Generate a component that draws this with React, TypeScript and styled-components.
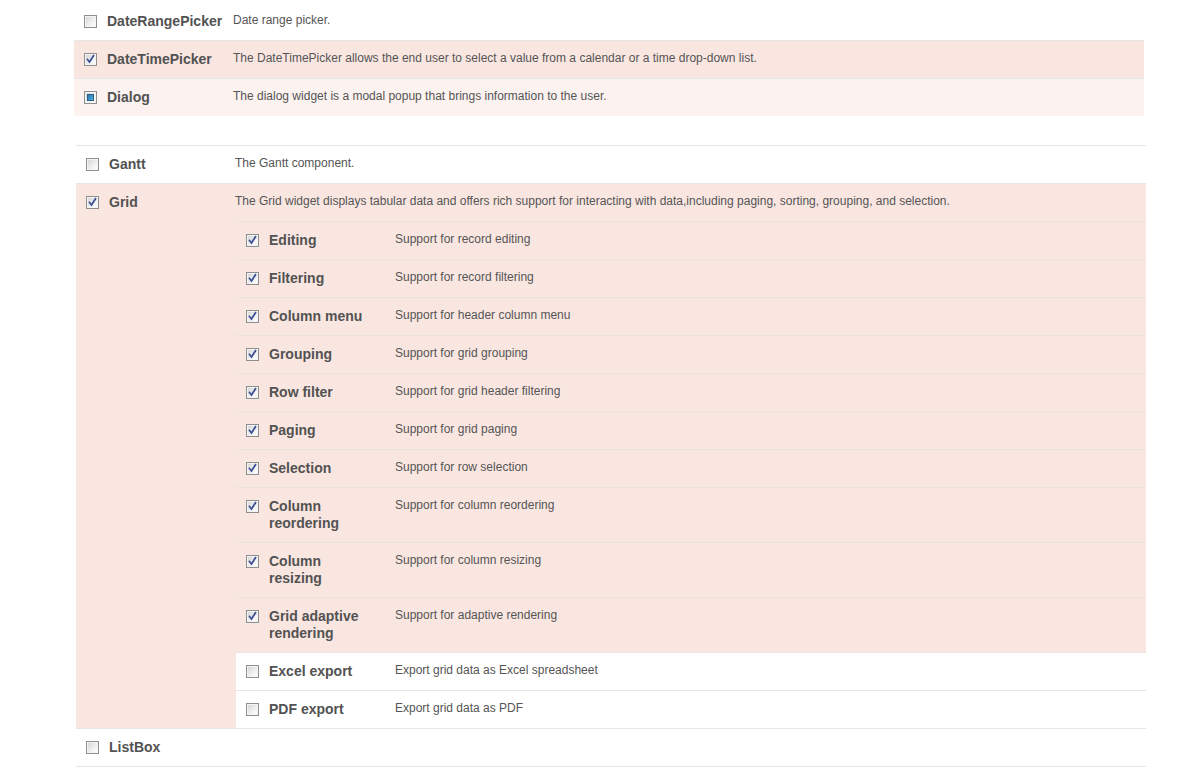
import React from "react";
import styled, { createGlobalStyle } from "styled-components";

const Global = createGlobalStyle`
  html, body { margin: 0; padding: 0; background: #fff; }
  body { font-family: Arial, "Liberation Sans", sans-serif; color: #555; }
`;

type State = "on" | "off" | "mixed";

interface Item {
  name: string;
  desc?: string;
  state: State;
  tone?: "pink" | "light" | "white";
  children?: Item[];
}

const Page = styled.div`
  padding-bottom: 4px;
`;

const List = styled.div<{ $left: number; $width: number; $framed?: boolean }>`
  margin-left: ${(p) => p.$left}px;
  width: ${(p) => p.$width}px;
  ${(p) =>
    p.$framed ? "border-top: 1px solid #e6e6e6; border-bottom: 1px solid #e6e6e6;" : ""}
`;

const TopSpacer = styled.div`
  height: 3px;
`;

const Gap = styled.div`
  height: 29px;
`;

const bgFor = (t?: string) =>
  t === "pink" ? "#fae6e1" : t === "light" ? "#fcf2ef" : "#ffffff";

const Row = styled.div<{ $tone?: string; $first?: boolean; $sub?: boolean }>`
  display: grid;
  grid-template-columns: 33px 126px 1fr;
  background: ${(p) => (p.$sub && p.$tone !== "white" ? "transparent" : bgFor(p.$tone))};
  border-top: ${(p) =>
    p.$first ? "none" : p.$sub ? "1px solid #ebe3e1" : "1px solid #e6e6e6"};
`;

const CheckCell = styled.div`
  padding: 12px 0 0 10px;
`;

const NameCell = styled.div<{ $sub?: boolean }>`
  padding: 10px ${(p) => (p.$sub ? "24px" : "6px")} 10px 0;
  font-size: 14px;
  line-height: 17px;
  font-weight: bold;
  color: #525252;
`;

const DescCell = styled.div<{ $nested?: boolean }>`
  padding: ${(p) => (p.$nested ? "9px 0 0 0" : "9px 0 10px 0")};
  font-size: 12px;
  line-height: 16px;
  color: #555;
`;

const DescText = styled.div<{ $nested?: boolean }>`
  padding-bottom: ${(p) => (p.$nested ? "12px" : "0")};
`;

const SubList = styled.div`
  margin-left: 1px;
  border-top: 1px solid #ebe3e1;
`;

const Box = styled.span`
  display: block;
  width: 13px;
  height: 13px;
  box-sizing: border-box;
  border: 1px solid #8e8f8f;
  position: relative;
`;

const BoxInner = styled.span`
  position: absolute;
  inset: 0;
  border: 1px solid #f4f4f4;
  background: linear-gradient(135deg, #d6d6d6 0%, #ececec 50%, #ffffff 100%);
`;

const Mixed = styled.span`
  position: absolute;
  left: 2px;
  top: 2px;
  width: 7px;
  height: 7px;
  box-sizing: border-box;
  border: 1px solid #2b5f8a;
  background: linear-gradient(135deg, #2a7ab0 0%, #3b95c9 60%, #62b5de 100%);
`;

const Check: React.FC<{ state: State }> = ({ state }) => (
  <Box>
    <BoxInner />
    {state === "on" && (
      <svg
        width="11"
        height="11"
        viewBox="0 0 11 11"
        style={{ position: "absolute", left: 0, top: 0 }}
      >
        <path
          d="M2.5 5.5 L4.5 8 L8.5 1.8"
          fill="none"
          stroke="#3a4d95"
          strokeWidth="1.7"
          strokeLinecap="square"
        />
      </svg>
    )}
    {state === "mixed" && <Mixed />}
  </Box>
);

const ItemRow: React.FC<{ item: Item; first?: boolean; sub?: boolean }> = ({
  item,
  first,
  sub,
}) => (
  <Row $tone={item.tone} $first={first} $sub={sub}>
    <CheckCell>
      <Check state={item.state} />
    </CheckCell>
    <NameCell $sub={sub}>{item.name}</NameCell>
    <DescCell $nested={!!item.children}>
      {item.desc && <DescText $nested={!!item.children}>{item.desc}</DescText>}
      {item.children && (
        <SubList>
          {item.children.map((c, i) => (
            <ItemRow key={c.name} item={c} first={i === 0} sub />
          ))}
        </SubList>
      )}
    </DescCell>
  </Row>
);

const top: Item[] = [
  { name: "DateRangePicker", desc: "Date range picker.", state: "off", tone: "white" },
  {
    name: "DateTimePicker",
    desc: "The DateTimePicker allows the end user to select a value from a calendar or a time drop-down list.",
    state: "on",
    tone: "pink",
  },
  {
    name: "Dialog",
    desc: "The dialog widget is a modal popup that brings information to the user.",
    state: "mixed",
    tone: "light",
  },
];

const sub = (name: string, desc: string, on = true): Item => ({
  name,
  desc,
  state: on ? "on" : "off",
  tone: on ? "pink" : "white",
});

const bottom: Item[] = [
  { name: "Gantt", desc: "The Gantt component.", state: "off", tone: "white" },
  {
    name: "Grid",
    desc: "The Grid widget displays tabular data and offers rich support for interacting with data,including paging, sorting, grouping, and selection.",
    state: "on",
    tone: "pink",
    children: [
      sub("Editing", "Support for record editing"),
      sub("Filtering", "Support for record filtering"),
      sub("Column menu", "Support for header column menu"),
      sub("Grouping", "Support for grid grouping"),
      sub("Row filter", "Support for grid header filtering"),
      sub("Paging", "Support for grid paging"),
      sub("Selection", "Support for row selection"),
      sub("Column reordering", "Support for column reordering"),
      sub("Column resizing", "Support for column resizing"),
      sub("Grid adaptive rendering", "Support for adaptive rendering"),
      sub("Excel export", "Export grid data as Excel spreadsheet", false),
      sub("PDF export", "Export grid data as PDF", false),
    ],
  },
  { name: "ListBox", state: "off", tone: "white" },
];

export default function App() {
  return (
    <Page>
      <Global />
      <TopSpacer />
      <List $left={74} $width={1070}>
        {top.map((it, i) => (
          <ItemRow key={it.name} item={it} first={i === 0} />
        ))}
      </List>
      <Gap />
      <List $left={76} $width={1070} $framed>
        {bottom.map((it, i) => (
          <ItemRow key={it.name} item={it} first={i === 0} />
        ))}
      </List>
    </Page>
  );
}
